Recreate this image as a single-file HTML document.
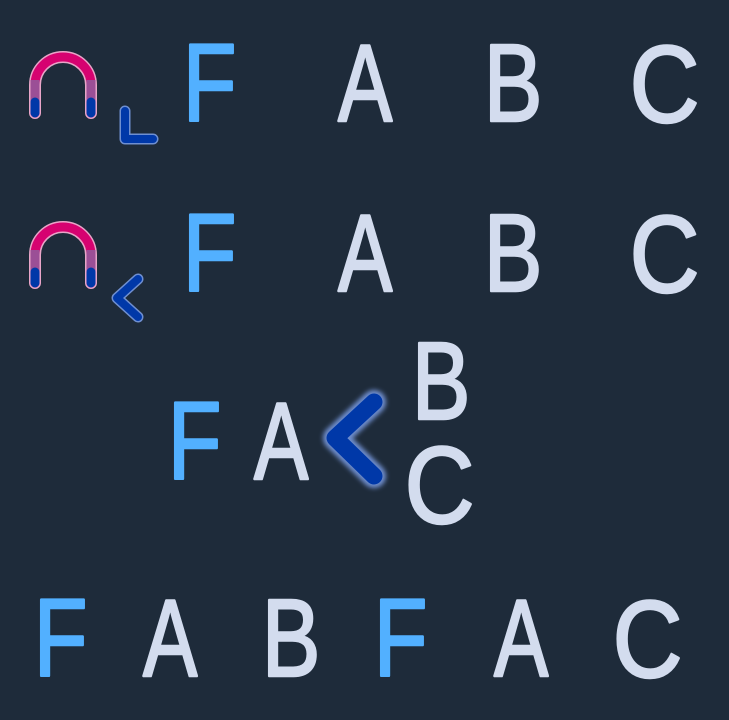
<!DOCTYPE html>
<html><head><meta charset="utf-8"><style>
html,body{margin:0;padding:0;background:#1e2b3a;}
svg{display:block}
text{font-family:"Liberation Sans",sans-serif;font-size:110px;stroke-width:2.5;stroke-linejoin:round}
.f{fill:#52b0ff;stroke:#52b0ff}
.l{fill:#d3dcee;stroke:#d3dcee}
</style></head><body>
<svg width="729" height="720" viewBox="0 0 729 720" xmlns="http://www.w3.org/2000/svg">
<defs>
<filter id="g" x="-50%" y="-50%" width="200%" height="200%"><feGaussianBlur stdDeviation="2.5"/></filter>
</defs>
<g>
<path d="M35 113 V85 A28 28 0 0 1 91 85 V113" fill="none" stroke="#e9a5c8" stroke-width="12" stroke-linecap="round"/>
<path d="M35 113 V85 A28 28 0 0 1 91 85 V113" fill="none" stroke="#d60270" stroke-width="9" stroke-linecap="round"/>
<path d="M35 80 V102 M91 80 V102" stroke="#9b4f96" stroke-width="9"/>
<path d="M35 102 V113 M91 102 V113" stroke="#0038a8" stroke-width="9" stroke-linecap="round"/>
</g>
<g transform="translate(0,170)">
<path d="M35 113 V85 A28 28 0 0 1 91 85 V113" fill="none" stroke="#e9a5c8" stroke-width="12" stroke-linecap="round"/>
<path d="M35 113 V85 A28 28 0 0 1 91 85 V113" fill="none" stroke="#d60270" stroke-width="9" stroke-linecap="round"/>
<path d="M35 80 V102 M91 80 V102" stroke="#9b4f96" stroke-width="9"/>
<path d="M35 102 V113 M91 102 V113" stroke="#0038a8" stroke-width="9" stroke-linecap="round"/>
</g>
<path d="M125 111 V139 H153" fill="none" stroke="#6f8fd0" stroke-width="11" stroke-linecap="round" stroke-linejoin="round"/>
<path d="M125 111 V139 H153" fill="none" stroke="#0038a8" stroke-width="8" stroke-linecap="round" stroke-linejoin="round"/>
<path d="M138 279 L117 298 L138 317" fill="none" stroke="#6f8fd0" stroke-width="11" stroke-linecap="round" stroke-linejoin="round"/>
<path d="M138 279 L117 298 L138 317" fill="none" stroke="#0038a8" stroke-width="8" stroke-linecap="round" stroke-linejoin="round"/>
<path d="M374 402 L335 438 L374 476" fill="none" stroke="#6f8fd0" stroke-width="24" stroke-linecap="round" stroke-linejoin="round" filter="url(#g)"/>
<path d="M374 402 L335 438 L374 476" fill="none" stroke="#0038a8" stroke-width="17" stroke-linecap="round" stroke-linejoin="round"/>

<g transform="translate(190,121) scale(0.8,1)"><text class="f" x="-9">F</text></g>
<g transform="translate(338,121) scale(0.74,1)"><text class="l" x="0">A</text></g>
<g transform="translate(491,121) scale(0.8,1)"><text class="l" x="-9">B</text></g>
<g transform="translate(634,122) scale(0.88,1)"><text class="l" x="-5">C</text></g>

<g transform="translate(190,291) scale(0.8,1)"><text class="f" x="-9">F</text></g>
<g transform="translate(338,291) scale(0.74,1)"><text class="l" x="0">A</text></g>
<g transform="translate(491,291) scale(0.8,1)"><text class="l" x="-9">B</text></g>
<g transform="translate(634,292) scale(0.88,1)"><text class="l" x="-5">C</text></g>

<g transform="translate(175,479) scale(0.8,1)"><text class="f" x="-9">F</text></g>
<g transform="translate(254,479) scale(0.74,1)"><text class="l" x="0">A</text></g>
<g transform="translate(419,419) scale(0.8,1)"><text class="l" x="-9">B</text></g>
<g transform="translate(409,523) scale(0.88,1)"><text class="l" x="-5">C</text></g>

<g transform="translate(41,676) scale(0.8,1)"><text class="f" x="-9">F</text></g>
<g transform="translate(143,676) scale(0.74,1)"><text class="l" x="0">A</text></g>
<g transform="translate(269,676) scale(0.8,1)"><text class="l" x="-9">B</text></g>
<g transform="translate(381,676) scale(0.8,1)"><text class="f" x="-9">F</text></g>
<g transform="translate(494,676) scale(0.74,1)"><text class="l" x="0">A</text></g>
<g transform="translate(617,677) scale(0.88,1)"><text class="l" x="-5">C</text></g>
</svg>
</body></html>
